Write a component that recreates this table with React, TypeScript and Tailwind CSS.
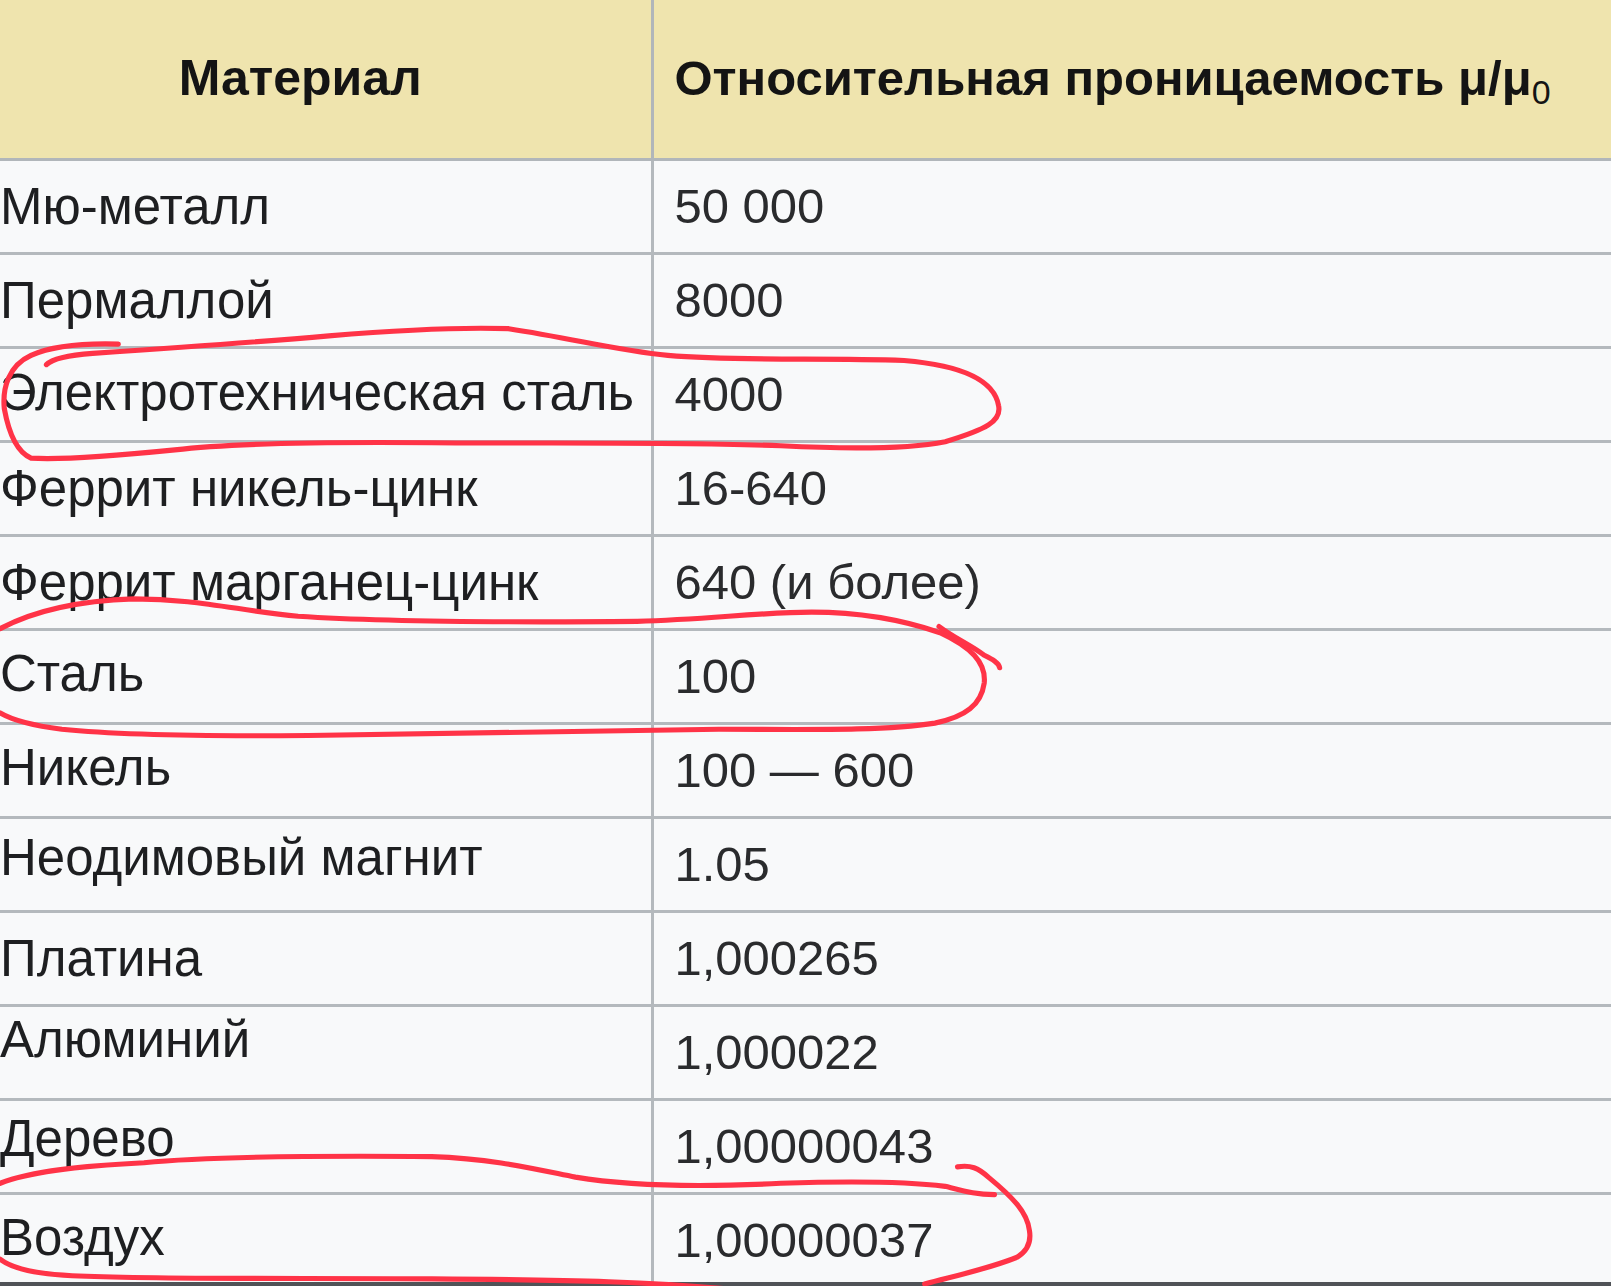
import * as React from "react";

type Row = { name: string; value: string; lift: string };

const rows: Row[] = [
  { name: "Мю-металл", value: "50 000", lift: "pb-0" },
  { name: "Пермаллой", value: "8000", lift: "pb-0" },
  { name: "Электротехническая сталь", value: "4000", lift: "pb-[4px]" },
  { name: "Феррит никель-цинк", value: "16-640", lift: "pb-0" },
  { name: "Феррит марганец-цинк", value: "640 (и более)", lift: "pb-0" },
  { name: "Сталь", value: "100", lift: "pb-[6px]" },
  { name: "Никель", value: "100 — 600", lift: "pb-[6px]" },
  { name: "Неодимовый магнит", value: "1.05", lift: "pb-[14px]" },
  { name: "Платина", value: "1,000265", lift: "pb-0" },
  { name: "Алюминий", value: "1,000022", lift: "pb-[26px]" },
  { name: "Дерево", value: "1,00000043", lift: "pb-[16px]" },
  { name: "Воздух", value: "1,00000037", lift: "pb-[6px]" },
];

const Scribbles: React.FC = () => (
  <svg
    className="pointer-events-none absolute inset-0"
    width="1611"
    height="1286"
    viewBox="0 0 1568 1252"
    fill="none"
    stroke="#ff3347"
    strokeWidth="5"
    strokeLinecap="round"
    strokeLinejoin="round"
  >
    {/* Электротехническая сталь */}
    <path d="M115 335 C 80 334, 50 337, 30 346 C 8 356, 2 378, 4 398 C 8 420, 16 440, 30 446 C 60 448, 110 444, 170 438 C 220 432, 300 430, 420 431 C 540 432, 650 430, 760 434 C 820 437, 880 438, 920 430 C 960 418, 975 410, 972 395 C 968 372, 940 356, 880 351 C 800 348, 720 352, 650 346 C 600 341, 560 330, 495 320 C 440 318, 380 322, 320 327 C 240 334, 150 340, 90 344 C 62 346, 50 350, 45 355" />
    {/* Сталь */}
    <path d="M0 612 C 30 596, 70 585, 130 583 C 190 583, 230 594, 290 600 C 380 606, 500 606, 620 605 C 690 603, 740 596, 790 596 C 840 596, 880 604, 915 616 C 945 630, 960 645, 958 665 C 955 686, 940 698, 910 704 C 860 712, 780 710, 700 710 C 560 711, 420 714, 300 716 C 200 717, 110 715, 60 710 C 30 706, 10 700, 0 694" />
    <path d="M914 610 C 930 622, 945 628, 958 638 C 966 642, 972 645, 973 650" />
    {/* Воздух */}
    <path d="M0 1152 C 30 1140, 80 1135, 140 1132 C 200 1126, 300 1125, 420 1126 C 480 1128, 520 1138, 560 1146 C 620 1156, 700 1155, 760 1152 C 820 1150, 880 1150, 920 1155 C 940 1160, 950 1163, 968 1163" />
    <path d="M932 1136 C 945 1134, 952 1137, 962 1146 C 985 1165, 1000 1180, 1002 1198 C 1004 1210, 1000 1218, 990 1224 C 960 1236, 930 1242, 900 1250" />
    <path d="M0 1226 C 10 1234, 30 1240, 70 1242 C 160 1246, 300 1244, 420 1245 C 560 1246, 640 1248, 720 1256" />
  </svg>
);

export default function App() {
  return (
    <div className="relative h-[1286px] w-[1611px] overflow-hidden bg-[#f8f9fa] font-[family-name:Liberation_Sans,Arial,sans-serif] text-[#1e1f21]">
      <table className="w-[1611px] table-fixed border-collapse">
        <colgroup>
          <col className="w-[652px]" />
          <col />
        </colgroup>
        <thead>
          <tr className="h-[159px] bg-[#efe4ae] text-[#141414]">
            <th className="border-r-[3px] border-b-[3px] border-[#b1b6ba] pr-[50px] text-center text-[50px] font-bold">
              Материал
            </th>
            <th className="border-b-[3px] border-[#b1b6ba] pl-[21px] text-left text-[49px] font-bold whitespace-nowrap">
              Относительная проницаемость μ/μ
              <sub className="text-[34px] font-normal">0</sub>
            </th>
          </tr>
        </thead>
        <tbody>
          {rows.map((r) => (
            <tr key={r.name} className="h-[94px]">
              <td
                className={`border-r-[3px] border-b-[3px] border-[#b4b9bd] pl-0 text-[51px] leading-none whitespace-nowrap ${r.lift}`}
              >
                {r.name}
              </td>
              <td className="border-b-[3px] border-[#b4b9bd] pl-[21px] text-[49px] leading-none text-[#2a2b2d]">
                {r.value}
              </td>
            </tr>
          ))}
        </tbody>
      </table>
      <div className="absolute bottom-0 left-0 h-[4px] w-full bg-[#505357]" />
      <Scribbles />
    </div>
  );
}
